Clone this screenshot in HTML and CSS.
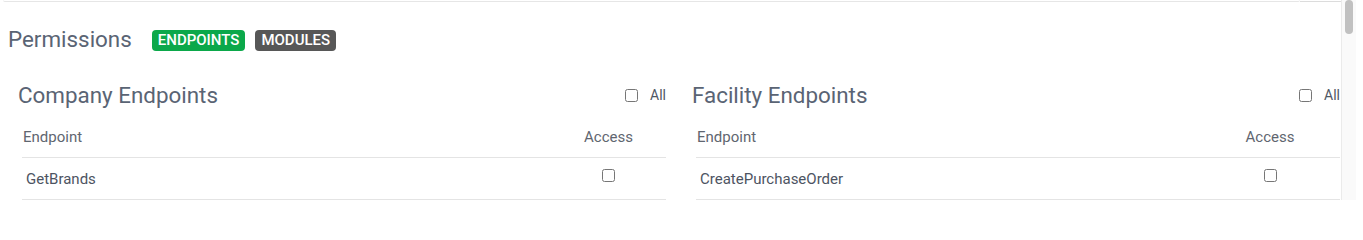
FILE: index.html
```
<!DOCTYPE html>
<html lang="en">
<head>
<meta charset="utf-8">
<title>Permissions</title>
<link rel="stylesheet" href="styles.css">
</head>
<body>
<div class="frame">
  <div class="viewport">
    <div class="topedge">
      <div class="card-bottom"></div>
      <div class="side-bottom"></div>
    </div>
    <div class="title-row">
      <h2 class="title">Permissions</h2>
      <span class="badge badge-green">ENDPOINTS</span>
      <span class="badge badge-dark">MODULES</span>
    </div>
    <div class="columns">
      <section class="col">
        <div class="col-head">
          <h3 class="col-title">Company Endpoints</h3>
          <label class="all"><input type="checkbox" class="cb"><span>All</span></label>
        </div>
        <table class="grid">
          <thead>
            <tr><th class="c-name">Endpoint</th><th class="c-access">Access</th></tr>
          </thead>
          <tbody>
            <tr><td class="c-name">GetBrands</td><td class="c-access"><input type="checkbox" class="cb"></td></tr>
          </tbody>
        </table>
      </section>
      <section class="col">
        <div class="col-head">
          <h3 class="col-title">Facility Endpoints</h3>
          <label class="all"><input type="checkbox" class="cb"><span>All</span></label>
        </div>
        <table class="grid grid-wide">
          <thead>
            <tr><th class="c-name">Endpoint</th><th class="c-access">Access</th></tr>
          </thead>
          <tbody>
            <tr><td class="c-name">CreatePurchaseOrder</td><td class="c-access"><input type="checkbox" class="cb"></td></tr>
          </tbody>
        </table>
      </section>
    </div>
  </div>
  <div class="scrollbar"><div class="thumb"></div></div>
</div>
</body>
</html>
```
FILE: styles.css
```
* { box-sizing: border-box; }
html, body { margin: 0; padding: 0; background: #fff; }
body { font-family: Roboto, "Liberation Sans", sans-serif; color: #5a6474; }

.frame { display: flex; width: 1356px; height: 200px; overflow: hidden; }
.viewport { width: 1341px; height: 200px; overflow: hidden; flex: none; }

.topedge { display: flex; height: 2px; }
.card-bottom { margin-left: 3px; width: 1297px; height: 2px; border-bottom: 1px solid #e6e6e6; border-radius: 0 0 3px 3px; }
.side-bottom { width: 41px; height: 2px; border-bottom: 1px solid #dcdcdc; }

.title-row { display: flex; align-items: center; margin-top: 24px; padding-left: 8px; height: 26px; }
.title { margin: 0; font-size: 22.4px; font-weight: 400; line-height: 26px; color: #5a6474; }
.badge { display: inline-block; height: 21px; line-height: 21px; padding: 0 6px; border-radius: 4px; color: #fff; font-size: 15px; font-weight: 500; margin-top: 3px; }
.badge-green { background: #0ba84a; margin-left: 20px; }
.badge-dark { background: #575757; margin-left: 10px; }

.columns { display: flex; width: 1348px; margin-left: 8px; margin-top: 31px; }
.col { width: 674px; flex: none; padding: 0 16px 0 14px; }
.col-head { display: flex; align-items: center; justify-content: space-between; height: 24px; margin-left: -4px; margin-bottom: 8px; }
.col-title { margin: 0; font-size: 22.4px; font-weight: 400; line-height: 24px; color: #5a6474; }
.all { display: flex; align-items: center; gap: 12px; font-size: 14px; color: #4f5765; }
.cb { width: 13px; height: 13px; margin: 0; }

.grid { width: 100%; border-collapse: collapse; font-size: 15px; }
.grid th { font-weight: 400; text-align: left; padding: 12px 1px 10px; line-height: 20px; color: #5f6670; border-bottom: 1px solid #e4e4e4; }
.grid td { height: 42px; padding: 0 4px; color: #4d5462; border-bottom: 1px solid #e4e4e4; vertical-align: middle; }
.grid .c-access { text-align: center; width: 115px; }
.grid td.c-access { padding-bottom: 3px; }
.grid-wide .c-access { width: 140px; }

.scrollbar { width: 15px; height: 200px; flex: none; border-left: 1px solid #ebebeb; background: #fafafa; padding: 0 3px; }
.thumb { width: 8px; height: 34px; border-radius: 4px; background: #c1c1c1; }
```
